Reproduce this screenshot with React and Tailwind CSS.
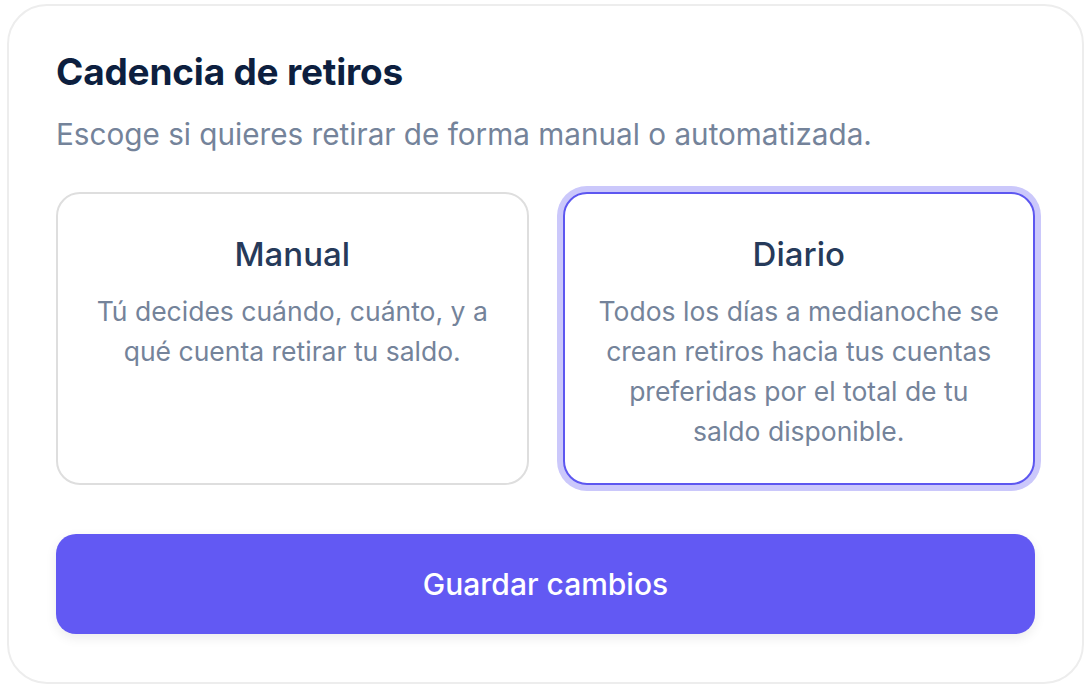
const options = [
  {
    id: 'manual',
    title: 'Manual',
    desc: 'Tú decides cuándo, cuánto, y a qué cuenta retirar tu saldo.',
  },
  {
    id: 'diario',
    title: 'Diario',
    desc: 'Todos los días a medianoche se crean retiros hacia tus cuentas preferidas por el total de tu saldo disponible.',
  },
];

function OptionCard({ option, selected }) {
  return (
    <div
      className={
        selected
          ? 'rounded-[24px] border-2 border-[#5d57f0] bg-white px-8 pt-10 pb-8 text-center shadow-[0_0_0_6px_#cbc8fb]'
          : 'rounded-[24px] border-2 border-[#dedede] bg-white px-8 pt-10 pb-8 text-center'
      }
    >
      <h3 className="text-[33px] leading-[40px] font-medium text-[#263a5a]">{option.title}</h3>
      <p className="mt-[17px] text-[26.5px] leading-[40px] text-[#74839a]">{option.desc}</p>
    </div>
  );
}

export default function App() {
  return (
    <div className="min-h-screen bg-white pl-[7px] pr-[6px] pt-[4px] font-['Inter',sans-serif]">
      <div className="h-[680px] rounded-[40px] border-2 border-[#ededed] bg-white px-[47px] pt-[46px]">
        <h1 className="text-[37px] leading-[40px] font-bold tracking-[-0.2px] text-[#0d1f3f]">Cadencia de retiros</h1>
        <p className="mt-[24px] text-[29.7px] leading-[36px] text-[#74839a]">
          Escoge si quieres retirar de forma manual o automatizada.
        </p>
        <div className="mt-[40px] grid grid-cols-2 gap-[34px]">
          {options.map((o) => (
            <OptionCard key={o.id} option={o} selected={o.id === 'diario'} />
          ))}
        </div>
        <button className="mt-[49px] h-[100px] w-full rounded-[20px] bg-[#6259f3] text-[30px] font-medium text-white shadow-[0_4px_12px_rgba(0,0,0,0.08)]">
          Guardar cambios
        </button>
      </div>
    </div>
  );
}
